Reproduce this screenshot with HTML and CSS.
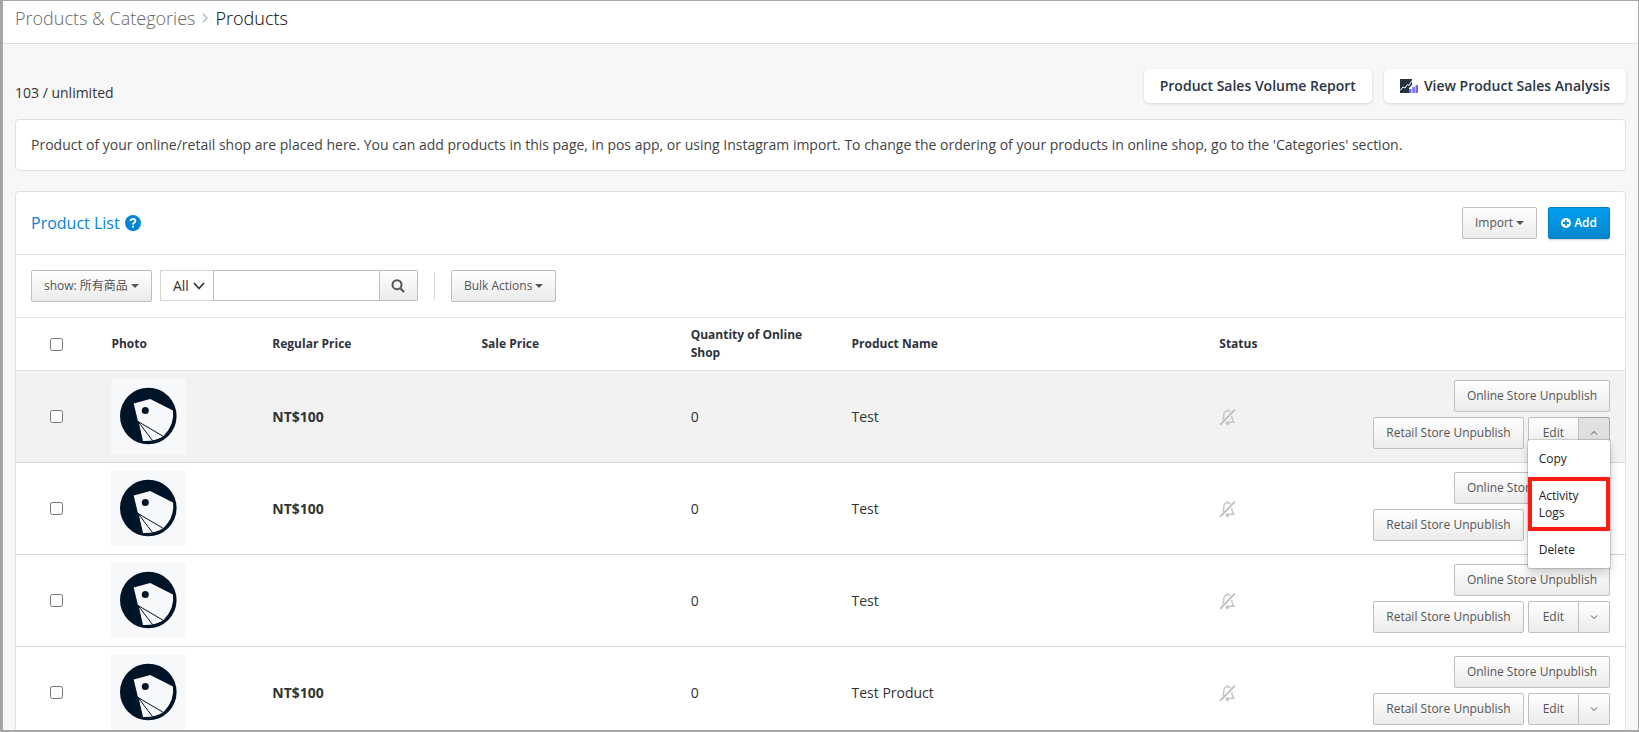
FILE: index.html
```html
<!DOCTYPE html>
<html lang="en">
<head>
    <meta charset="UTF-8">
    <title>Products</title>
    <link rel="stylesheet" href="styles.css">
</head>
<body>
    <svg class="symbols" aria-hidden="true">
        <symbol id="photo" viewBox="0 0 75 75">
            <rect width="75" height="75" fill="#f6f8fa"/>
            <circle cx="37.3" cy="37" r="28.3" fill="#001427"/>
            <path d="M22.7 24.6 L39.2 20 L62 31.6 Q63.800 46 52.500 57 Q45 62.500 31.500 62 L27 42.500 Z" fill="#f6f8fa"/>
            <circle cx="34.300" cy="31.500" r="3.500" fill="#001427"/>
            <path d="M27 42.500 L52.500 57.500 M27 42.500 L41.500 61.500 M27 42.500 L31.500 62" fill="none" stroke="#001427"/>
        </symbol>
        <symbol id="bell-off" viewBox="0 0 16 17">
            <path d="M3.500 11.500 Q4.500 10 4.500 6.500 Q4.700 3 8 2.500 Q9.800 2.600 10.800 3.800 M8 1 V2.500 M12 7.500 Q12 11 14 13.500 H6.500" fill="none" stroke="#c4c4c4" stroke-width="1.300"/>
            <path d="M1 16 L15 1.500" stroke="#bdbdbd" stroke-width="1.600"/>
            <path d="M6 14 h4 q-.5 2.300-2 2.300 t-2-2.300" fill="#c4c4c4"/>
        </symbol>
        <symbol id="down" viewBox="0 0 8 8">
            <path d="M1 2.500 L4 5.500 L7 2.500" fill="none" stroke="currentColor"/>
        </symbol>
        <symbol id="up" viewBox="0 0 8 8">
            <path d="M1 5.500 L4 2.500 L7 5.500" fill="none" stroke="currentColor"/>
        </symbol>
    </svg>

    <div class="page">
        <nav class="breadcrumb">
            <a href="#">Products &amp; Categories</a>
            <svg width="6" height="10" viewBox="0 0 6 10"><path d="M1 .7 L5 5 L1 9.300" fill="none" stroke="#b4bccb" stroke-width="1.300"/></svg>
            <span class="current">Products</span>
        </nav>

        <main class="content">
            <div class="summary">
                <div class="count">103 / unlimited</div>
                <div class="reports">
                    <button type="button" class="report-btn">Product Sales Volume Report</button>
                    <button type="button" class="report-btn">
                        <svg width="18" height="14" viewBox="0 0 18 14">
                            <path d="M0 0 H12 V6 L9 9 V14 H0 Z" fill="#26323d"/>
                            <path d="M0 11.500 L3 8 L5 9 L7.500 5.500 L9 6.500 L12 1.500" fill="none" stroke="#fff"/>
                            <path d="M9 10 h2.500 v4 H9z M12.300 8 h2.500 v6 h-2.500z M15.500 6 H18 v8 h-2.500z" fill="#6f6af8"/>
                        </svg>
                        View Product Sales Analysis
                    </button>
                </div>
            </div>

            <p class="notice">Product of your online/retail shop are placed here. You can add products in this page, in pos app, or using Instagram import. To change the ordering of your products in online shop, go to the 'Categories' section.</p>

            <section class="panel">
                <header class="panel-header">
                    <h2>Product List
                        <svg width="16" height="16" viewBox="0 0 16 16"><circle cx="8" cy="8" r="8" fill="#0484d6"/><path d="M5.600 6 Q5.800 4 8 4 Q10.400 4 10.400 6 Q10.400 7 9.200 7.700 Q8 8.400 8 9.400" fill="none" stroke="#fff" stroke-width="1.900"/><rect x="7" y="10.600" width="2" height="2" fill="#fff"/></svg>
                    </h2>
                    <div class="panel-actions">
                        <button type="button" class="btn">Import <i class="caret"></i></button>
                        <button type="button" class="btn btn-primary">
                            <svg width="10" height="10" viewBox="0 0 10 10"><circle cx="5" cy="5" r="5" fill="#fff"/><path d="M5 2 V8 M2 5 H8" stroke="#0292de" stroke-width="1.800"/></svg>
                            Add
                        </button>
                    </div>
                </header>

                <div class="toolbar">
                    <button type="button" class="btn">show: 所有商品 <i class="caret"></i></button>
                    <form class="search">
                        <div class="search-type">
                            <select aria-label="Search field">
                                <option>All</option>
                            </select>
                            <svg width="12" height="8" viewBox="0 0 12 8"><path d="M1 1 L6 6.500 L11 1" fill="none" stroke="#333" stroke-width="1.700"/></svg>
                        </div>
                        <input type="text" class="search-key" aria-label="Search products">
                        <button type="button" class="search-btn" aria-label="Search">
                            <svg width="14" height="14" viewBox="0 0 14 14"><circle cx="6" cy="5.700" r="4.500" fill="none" stroke="#555" stroke-width="2"/><path d="M9 9 L13 13" stroke="#555" stroke-width="2.200"/></svg>
                        </button>
                    </form>
                    <div class="divider"></div>
                    <button type="button" class="btn">Bulk Actions <i class="caret"></i></button>
                </div>

                <table class="products">
                    <thead>
                        <tr>
                            <th class="col-check"><input type="checkbox" aria-label="Select all"></th>
                            <th class="col-photo">Photo</th>
                            <th class="col-price">Regular Price</th>
                            <th class="col-price">Sale Price</th>
                            <th class="col-qty">Quantity of Online Shop</th>
                            <th>Product Name</th>
                            <th class="col-status">Status</th>
                            <th class="col-actions"></th>
                        </tr>
                    </thead>
                    <tbody>
                        <tr class="active">
                            <td class="col-check"><input type="checkbox" aria-label="Select product"></td>
                            <td><svg class="photo"><use href="#photo"/></svg></td>
                            <td class="price">NT$100</td>
                            <td></td>
                            <td>0</td>
                            <td>Test</td>
                            <td><svg class="bell"><use href="#bell-off"/></svg></td>
                            <td class="col-actions">
                                <div class="row-actions">
                                    <button type="button" class="btn">Online Store Unpublish</button>
                                    <button type="button" class="btn">Retail Store Unpublish</button>
                                    <div class="btn-group">
                                        <button type="button" class="btn">Edit</button>
                                        <button type="button" class="btn toggle open" aria-label="More"><svg width="8" height="8"><use href="#up"/></svg></button>
                                        <div class="menu">
                                            <a href="#">Copy</a>
                                            <a href="#" class="marked">Activity Logs</a>
                                            <a href="#">Delete</a>
                                        </div>
                                    </div>
                                </div>
                            </td>
                        </tr>
                        <tr>
                            <td class="col-check"><input type="checkbox" aria-label="Select product"></td>
                            <td><svg class="photo"><use href="#photo"/></svg></td>
                            <td class="price">NT$100</td>
                            <td></td>
                            <td>0</td>
                            <td>Test</td>
                            <td><svg class="bell"><use href="#bell-off"/></svg></td>
                            <td class="col-actions">
                                <div class="row-actions">
                                    <button type="button" class="btn">Online Store Unpublish</button>
                                    <button type="button" class="btn">Retail Store Unpublish</button>
                                    <div class="btn-group">
                                        <button type="button" class="btn">Edit</button>
                                        <button type="button" class="btn toggle" aria-label="More"><svg width="8" height="8"><use href="#down"/></svg></button>
                                    </div>
                                </div>
                            </td>
                        </tr>
                        <tr>
                            <td class="col-check"><input type="checkbox" aria-label="Select product"></td>
                            <td><svg class="photo"><use href="#photo"/></svg></td>
                            <td></td>
                            <td></td>
                            <td>0</td>
                            <td>Test</td>
                            <td><svg class="bell"><use href="#bell-off"/></svg></td>
                            <td class="col-actions">
                                <div class="row-actions">
                                    <button type="button" class="btn">Online Store Unpublish</button>
                                    <button type="button" class="btn">Retail Store Unpublish</button>
                                    <div class="btn-group">
                                        <button type="button" class="btn">Edit</button>
                                        <button type="button" class="btn toggle" aria-label="More"><svg width="8" height="8"><use href="#down"/></svg></button>
                                    </div>
                                </div>
                            </td>
                        </tr>
                        <tr>
                            <td class="col-check"><input type="checkbox" aria-label="Select product"></td>
                            <td><svg class="photo"><use href="#photo"/></svg></td>
                            <td class="price">NT$100</td>
                            <td></td>
                            <td>0</td>
                            <td>Test Product</td>
                            <td><svg class="bell"><use href="#bell-off"/></svg></td>
                            <td class="col-actions">
                                <div class="row-actions">
                                    <button type="button" class="btn">Online Store Unpublish</button>
                                    <button type="button" class="btn">Retail Store Unpublish</button>
                                    <div class="btn-group">
                                        <button type="button" class="btn">Edit</button>
                                        <button type="button" class="btn toggle" aria-label="More"><svg width="8" height="8"><use href="#down"/></svg></button>
                                    </div>
                                </div>
                            </td>
                        </tr>
                    </tbody>
                </table>
            </section>
        </main>
    </div>
</body>
</html>
```
FILE: styles.css
```css
* {
    margin: 0;
    padding: 0;
    box-sizing: border-box;
}
body {
    font-family: "Open Sans", "Noto Sans CJK TC", sans-serif;
    font-size: 14px;
    line-height: 20px;
    color: #333;
}
button, input, select {
    font: inherit;
    color: inherit;
}
a {
    color: inherit;
    text-decoration: none;
}
svg {
    flex: none;
}
.symbols {
    display: none;
}
.page {
    height: 100vh;
    overflow: hidden;
    background: #f7f7f7;
    border: solid #a6a6a6;
    border-width: 1px 1px 2px 3px;
}

/* breadcrumb */
.breadcrumb {
    display: flex;
    align-items: center;
    gap: 7px;
    height: 43px;
    padding: 0 12px 9px;
    background: #fff;
    border-bottom: 1px solid #dedede;
    font-size: 18px;
    font-weight: 300;
    color: #666;
}
.breadcrumb .current {
    color: #000;
}
.content {
    padding: 25px 12px 0;
}
.summary {
    display: flex;
    justify-content: space-between;
    align-items: flex-start;
    margin-bottom: 16px;
}
.count {
    padding-top: 14px;
}
.reports {
    display: flex;
    gap: 12px;
}
.report-btn {
    display: flex;
    align-items: center;
    gap: 5px;
    height: 34px;
    padding: 0 16px;
    border: 0;
    border-radius: 5px;
    background: #fff;
    box-shadow: 0 1px 3px rgba(0, 0, 0, .15);
    font-weight: 600;
    color: #2b3442;
}
.report-btn svg {
    margin-right: 1px;
}
.notice {
    margin-bottom: 20px;
    padding: 15px;
    background: #fff;
    border: 1px solid #e1e1e1;
    border-radius: 4px;
    color: #444;
}

/* panel */
.panel {
    background: #fff;
    border: 1px solid #e1e1e1;
    border-radius: 4px;
}
.panel-header {
    display: flex;
    justify-content: space-between;
    align-items: center;
    padding: 15px;
    border-bottom: 1px solid #e1e1e1;
}
.panel-header h2 {
    display: flex;
    align-items: center;
    gap: 5px;
    font-size: 16px;
    font-weight: 400;
    color: #0484d6;
}
.panel-actions {
    display: flex;
    gap: 11px;
}
.btn {
    display: flex;
    align-items: center;
    justify-content: center;
    gap: 3px;
    height: 32px;
    padding: 0 12px;
    border: 1px solid #bfbfbf;
    border-radius: 2px;
    background: linear-gradient(#fff, #ebebeb);
    font-size: 12px;
    color: #555;
    white-space: nowrap;
}
.btn-primary {
    border-color: #0482c6;
    background: linear-gradient(#029df0, #0487cc);
    box-shadow: 0 1px 2px rgba(0, 0, 0, .2);
    color: #fff;
    font-weight: 600;
}
.caret {
    border: 4px solid transparent;
    border-top-color: currentColor;
    border-bottom: 0;
}

/* toolbar */
.toolbar {
    display: flex;
    align-items: flex-start;
    padding: 15px;
    border-bottom: 1px solid #e1e1e1;
}
.search {
    display: flex;
    height: 31px;
    margin-left: 8px;
}
.search-type {
    display: flex;
    align-items: center;
    padding: 0 8px 0 12px;
    border: 1px solid #d4d4d4;
    border-right: 0;
}
.search-type select {
    width: 20px;
    border: 0;
    outline: 0;
    background: none;
    appearance: none;
}
.search-key {
    width: 167px;
    padding: 0 8px;
    border: 1px solid #bfbfbf;
    outline: 0;
}
.search-btn {
    display: flex;
    align-items: center;
    justify-content: center;
    width: 38px;
    border: 1px solid #bfbfbf;
    border-left: 0;
    border-radius: 0 2px 2px 0;
    background: linear-gradient(#fff, #ebebeb);
}
.divider {
    width: 1px;
    height: 28px;
    margin: 2px 16px;
    background: #d9d9d9;
}

/* table */
.products {
    width: 100%;
    table-layout: fixed;
    border-collapse: collapse;
}
.products th {
    height: 52px;
    padding: 8px 15px;
    border-bottom: 1px solid #e1e1e1;
    font-size: 12px;
    line-height: 18px;
    font-weight: 700;
    text-align: left;
    color: #2f323c;
}
.products td {
    padding: 8px 15px;
    border-bottom: 1px solid #d5d5d5;
    vertical-align: middle;
}
.products .active {
    background: #f2f2f2;
}
.products .price {
    font-weight: 700;
}
.products .col-check {
    width: 5%;
    text-align: center;
}
.col-check input {
    display: block;
    width: 13px;
    height: 13px;
    margin: 0 auto;
}
.col-photo, .col-qty {
    width: 10%;
}
.col-price {
    width: 13%;
}
.col-status {
    width: 8%;
}
.products .col-actions {
    width: 292px;
    vertical-align: top;
}
.photo {
    display: block;
    width: 75px;
    height: 75px;
}
.bell {
    display: block;
    width: 17px;
    height: 18px;
}
.row-actions {
    display: flex;
    flex-wrap: wrap;
    justify-content: flex-end;
    gap: 5px 4px;
    padding-top: 1px;
}
.btn-group {
    position: relative;
    display: flex;
}
.btn-group .btn {
    padding: 0 14px;
    border-radius: 2px 0 0 2px;
}
.btn-group .toggle {
    padding: 0 11px;
    border-left: 0;
    border-radius: 0 2px 2px 0;
}
.btn-group .open {
    border-color: #a6a6a6;
    background: #e0e0e0;
}
.menu {
    position: absolute;
    top: 23px;
    left: 0;
    right: 0;
    z-index: 1;
    background: #fff;
    border-radius: 2px;
    box-shadow: 0 0 1px 1px rgba(0, 0, 0, .15), 0 5px 10px rgba(0, 0, 0, .2);
    font-size: 12px;
    line-height: 17px;
    color: #222;
}
.menu a {
    display: block;
    padding: 10px 11px;
}
.menu .marked {
    padding: 6px 7px;
    border: 4px solid #ff1c0f;
}
```
